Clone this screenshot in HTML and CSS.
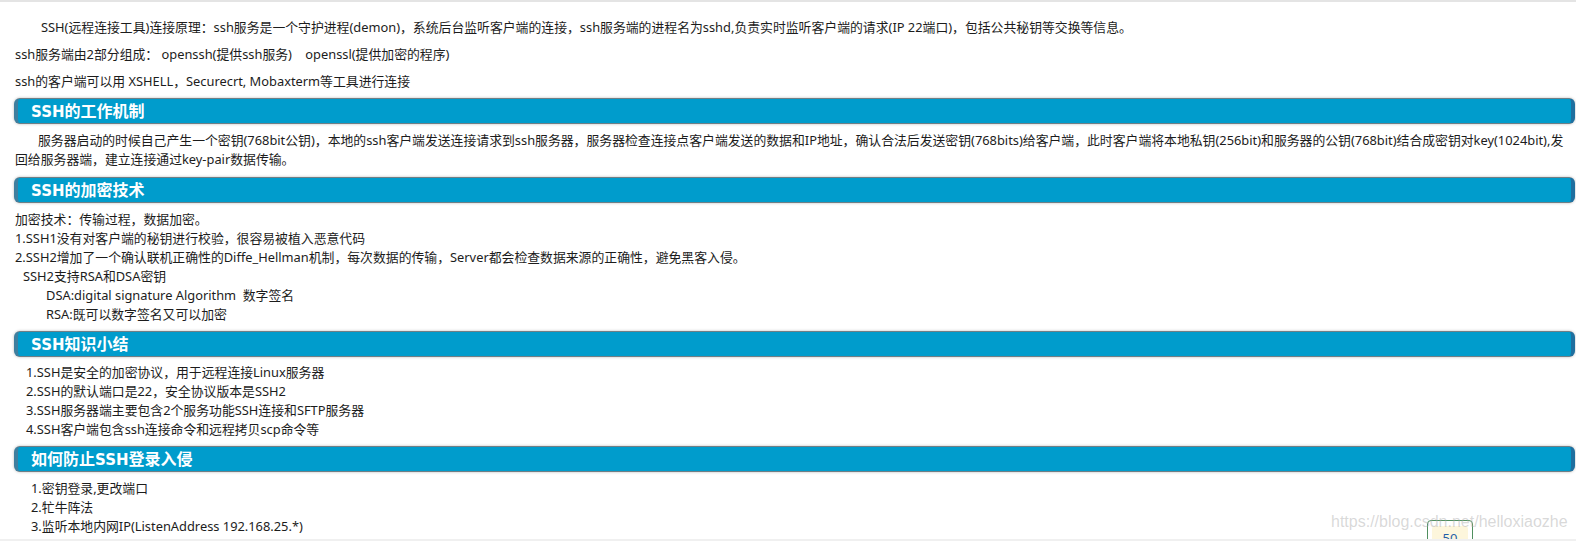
FILE: index.html
```html
<!DOCTYPE html>
<html lang="zh">
<head>
<meta charset="utf-8">
<title>SSH</title>
<link rel="stylesheet" href="styles.css">
</head>
<body>
<main class="article">
  <section class="intro">
    <p class="para first">SSH(远程连接工具)连接原理：ssh服务是一个守护进程(demon)，系统后台监听客户端的连接，ssh服务端的进程名为sshd,负责实时监听客户端的请求(IP 22端口)，包括公共秘钥等交换等信息。</p>
    <p class="para">ssh服务端由2部分组成： openssh(提供ssh服务)&nbsp;&nbsp;&nbsp; openssl(提供加密的程序)</p>
    <p class="para">ssh的客户端可以用 XSHELL，Securecrt, Mobaxterm等工具进行连接</p>
  </section>
  <h2 class="heading"><span class="lat">SSH</span>的工作机制</h2>
  <p class="body indent">服务器启动的时候自己产生一个密钥(768bit公钥)，本地的ssh客户端发送连接请求到ssh服务器，服务器检查连接点客户端发送的数据和IP地址，确认合法后发送密钥(768bits)给客户端，此时客户端将本地私钥(256bit)和服务器的公钥(768bit)结合成密钥对key(1024bit),发<br>回给服务器端，建立连接通过key-pair数据传输。</p>
  <h2 class="heading"><span class="lat">SSH</span>的加密技术</h2>
  <div class="lines enc">
    <div>加密技术：传输过程，数据加密。</div>
    <div>1.SSH1没有对客户端的秘钥进行校验，很容易被植入恶意代码</div>
    <div>2.SSH2增加了一个确认联机正确性的Diffe_Hellman机制，每次数据的传输，Server都会检查数据来源的正确性，避免黑客入侵。</div>
    <div class="sub1">SSH2支持RSA和DSA密钥</div>
    <div class="sub2">DSA:digital signature Algorithm&nbsp; 数字签名</div>
    <div class="sub2">RSA:既可以数字签名又可以加密</div>
  </div>
  <h2 class="heading"><span class="lat">SSH</span>知识小结</h2>
  <div class="lines summary">
    <div>1.SSH是安全的加密协议，用于远程连接Linux服务器</div>
    <div>2.SSH的默认端口是22，安全协议版本是SSH2</div>
    <div>3.SSH服务器端主要包含2个服务功能SSH连接和SFTP服务器</div>
    <div>4.SSH客户端包含ssh连接命令和远程拷贝scp命令等</div>
  </div>
  <h2 class="heading h4">如何防止<span class="lat">SSH</span>登录入侵</h2>
  <div class="lines defend">
    <div>1.密钥登录,更改端口</div>
    <div>2.牤牛阵法</div>
    <div>3.监听本地内网IP(ListenAddress 192.168.25.*)</div>
  </div>
</main>
<div class="badge"><div class="badge-inner">50</div></div>
<div class="watermark">https://blog.csdn.net/helloxiaozhe</div>
</body>
</html>
```
FILE: styles.css
```css
* { box-sizing: border-box; }
html, body { margin: 0; height: 541px; overflow: hidden; background: #fff; }
body {
  position: relative;
  border-top: 2px solid #e4e4e4;
  font-family: "Noto Sans", "Noto Sans CJK SC", sans-serif;
  font-size: 12.85px;
  color: #1c1c1c;
}
body::after {
  content: "";
  position: absolute;
  left: 0; right: 0; bottom: 0;
  height: 2px;
  background: #f0f0f0;
}
.article { padding: 0 1px 0 15px; }
.intro { padding-top: 12px; }
.para { margin: 0; line-height: 27px; }
.first { text-indent: 26px; }
.heading {
  margin: 3px 0 0 -1px;
  height: 26px;
  padding-left: 13px;
  background: #009ccc;
  border: 1px solid #6f7f86;
  border-left: 4px solid #3f7f9f;
  border-right: 4px solid #1f6f9f;
  border-radius: 6px;
  box-shadow: 0 0 3px #bbb;
  color: #fff;
  font-size: 16px;
  font-weight: 700;
  line-height: 24px;
}
.lat { font-family: "DejaVu Sans", sans-serif; font-size: 15px; }
.body { margin: 7px 0 0; line-height: 19px; }
.indent { text-indent: 23px; }
.lines { line-height: 19px; }
.lines + .heading { margin-top: 7px; }
.lines + .h4 { margin-top: 7px; }
.body + .heading { margin-top: 8px; }
.enc { padding-top: 7px; }
.sub1 { padding-left: 8px; }
.sub2 { padding-left: 31px; }
.summary { padding: 6px 0 0 11px; }
.defend { padding: 7px 0 0 16px; }
.badge {
  position: absolute;
  left: 1427px;
  top: 518px;
  width: 46px;
  height: 30px;
  border: 1px solid #4f8f5f;
  border-radius: 4px;
  padding: 5px 4px 0;
}
.badge-inner {
  background: #fdf6dc;
  border-radius: 3px 3px 0 0;
  height: 24px;
  color: #1f5fa8;
  font-size: 13px;
  line-height: 24px;
  text-align: center;
}
.watermark {
  position: absolute;
  left: 1331px;
  top: 511px;
  font-family: "Liberation Sans", sans-serif;
  font-size: 16px;
  color: rgba(170, 170, 170, 0.45);
  white-space: nowrap;
}
```
